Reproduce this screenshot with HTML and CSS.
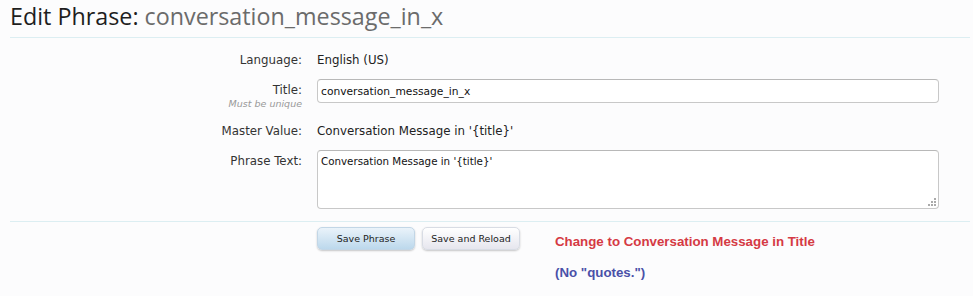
FILE: index.html
```html
<!DOCTYPE html>
<html>
<head>
<meta charset="utf-8">
<link rel="stylesheet" href="styles.css">
</head>
<body>
<div class="titleBar">
  <h1>Edit Phrase: <span class="phraseName">conversation_message_in_x</span></h1>
</div>
<form class="xenForm">
  <div class="fields">
    <div class="ctrlUnit">
      <div class="label">Language:</div>
      <div class="value">English (US)</div>
    </div>
    <div class="ctrlUnit">
      <div class="label">Title:<span class="hint">Must be unique</span></div>
      <div class="value"><input class="textCtrl" type="text" value="conversation_message_in_x"></div>
    </div>
    <div class="ctrlUnit">
      <div class="label">Master Value:</div>
      <div class="value">Conversation Message in '{title}'</div>
    </div>
    <div class="ctrlUnit">
      <div class="label">Phrase Text:</div>
      <div class="value"><textarea class="textCtrl area">Conversation Message in '{title}'</textarea></div>
    </div>
  </div>
  <div class="submitUnit">
    <div class="spacer"></div>
    <div class="buttons">
      <button type="button" class="button primary">Save Phrase</button>
      <button type="button" class="button">Save and Reload</button>
    </div>
    <div class="notes">
      <div class="noteRed">Change to Conversation Message in Title</div>
      <div class="noteBlue">(No "quotes.")</div>
    </div>
  </div>
</form>
</body>
</html>
```

FILE: styles.css
```css
html, body {
  margin: 0;
  padding: 0;
  background: #fcfcfd;
  font-family: "DejaVu Sans", Verdana, sans-serif;
  color: #333;
}

.titleBar {
  margin: 0 3px 0 10px;
  height: 37px;
  border-bottom: 1px solid #dceef2;
}

h1 {
  margin: 0;
  padding-top: 1px;
  font-family: "Open Sans", sans-serif;
  font-weight: normal;
  font-size: 23.3px;
  line-height: 31px;
  color: #1e1e1e;
}

.phraseName {
  color: #6b6b6b;
}

.xenForm {
  margin: 0 3px 0 10px;
}

.fields {
  padding: 14px 0 12px;
  border-bottom: 1px solid #dceef2;
  display: flex;
  flex-direction: column;
  gap: 11px;
}

.ctrlUnit {
  display: grid;
  grid-template-columns: 292px 1fr;
  column-gap: 15px;
  font-size: 11.8px;
  line-height: 16px;
}

.label {
  text-align: right;
  color: #333;
}

.ctrlUnit:nth-child(2) .label,
.ctrlUnit:nth-child(4) .label {
  padding-top: 3px;
}

.ctrlUnit:nth-child(2) {
  margin-bottom: 3px;
}

.hint {
  display: block;
  font-size: 9.5px;
  line-height: 11px;
  font-style: italic;
  color: #999;
}

.value {
  padding-right: 31px;
  color: #222;
}

.textCtrl {
  display: block;
  box-sizing: border-box;
  width: 100%;
  height: 24px;
  margin: 0;
  padding: 2px 3px;
  border: 1px solid #c8c8c8;
  border-top-color: #b8b8b8;
  border-radius: 4px;
  background-color: #fff;
  font-family: "DejaVu Sans", Verdana, sans-serif;
  font-size: 10.7px;
  color: #111;
  outline: none;
}

.area {
  height: 59px;
  padding: 4px 3px;
  resize: none;
  font-size: 10.3px;
  line-height: 13px;
  background-image:
    radial-gradient(circle, #aaa 0.9px, transparent 1px),
    radial-gradient(circle, #aaa 0.9px, transparent 1px),
    radial-gradient(circle, #aaa 0.9px, transparent 1px),
    radial-gradient(circle, #aaa 0.9px, transparent 1px),
    radial-gradient(circle, #aaa 0.9px, transparent 1px),
    radial-gradient(circle, #aaa 0.9px, transparent 1px);
  background-size: 2px 2px;
  background-repeat: no-repeat;
  background-position:
    right 2px bottom 2px,
    right 5px bottom 2px,
    right 8px bottom 2px,
    right 2px bottom 5px,
    right 5px bottom 5px,
    right 2px bottom 8px;
}

.submitUnit {
  display: flex;
  padding-top: 5px;
}

.spacer {
  width: 307px;
  flex: none;
}

.buttons {
  display: flex;
  gap: 7px;
  align-items: flex-start;
}

.button {
  width: 98px;
  height: 23px;
  padding: 0;
  border: 1px solid #d8dce4;
  border-radius: 5px;
  background: linear-gradient(#ffffff, #e6e6ee);
  box-shadow: 0 1px 2px rgba(0, 0, 0, 0.22);
  font-family: "DejaVu Sans", Verdana, sans-serif;
  font-size: 9.5px;
  color: #222;
}

.button.primary {
  border-color: #c2d6e6;
  background: linear-gradient(#eaf3fa, #bcd8ec);
}

.notes {
  margin-left: 35px;
  font-family: "Liberation Sans", Arial, sans-serif;
  font-weight: bold;
  font-size: 13.3px;
}

.noteRed {
  color: #d53a44;
  margin-top: 6px;
  line-height: 17px;
}

.noteBlue {
  color: #4a50a8;
  margin-top: 14px;
  line-height: 17px;
}
```
